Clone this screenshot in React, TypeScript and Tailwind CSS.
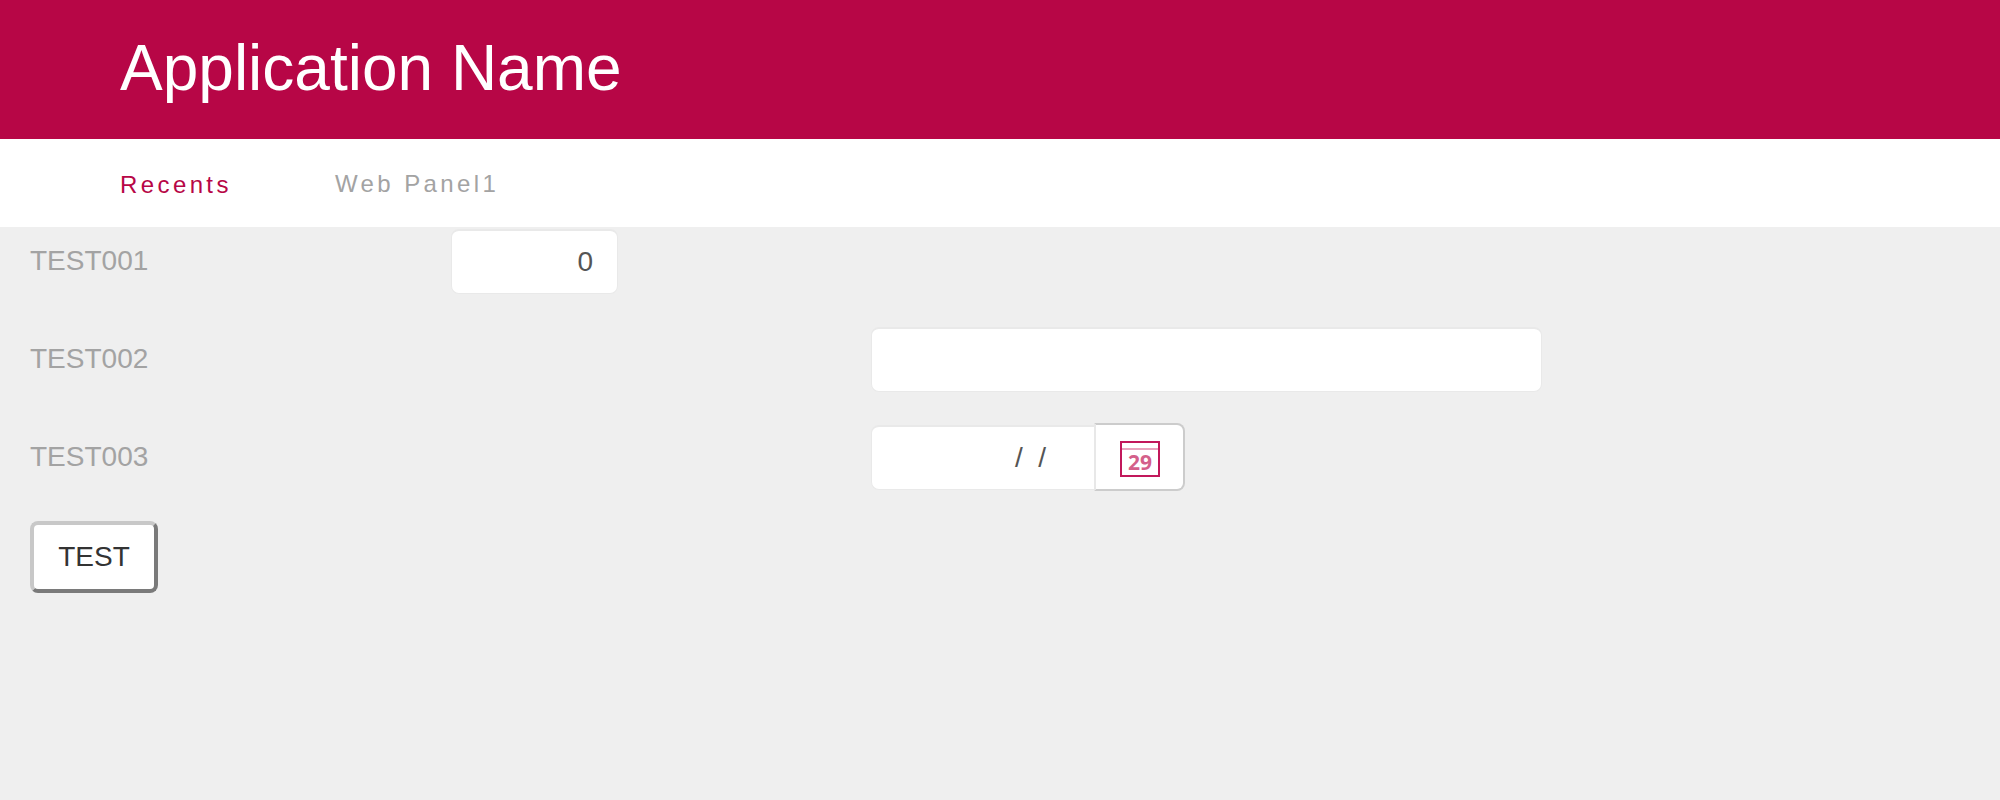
const sans = "font-['Liberation_Sans',Arial,sans-serif]";

function CalendarIcon() {
  return (
    <svg className="mt-[3px]" width="40" height="36" viewBox="0 0 40 36" fill="none">
      <rect x="1" y="1" width="38" height="34" fill="#fff" stroke="#c2185b" strokeWidth="2" />
      <line x1="2" y1="8" x2="38" y2="8" stroke="#e9a3bd" strokeWidth="2" />
      <text
        x="20"
        y="29"
        textAnchor="middle"
        fontSize="21"
        fontWeight="700"
        fill="#d4608a"
        fontFamily="'Open Sans', sans-serif"
      >
        29
      </text>
    </svg>
  );
}

function Label({ children, width }: { children: string; width: string }) {
  return <div className={`${width} shrink-0 text-[28px] leading-[64px] text-[#a3a3a3]`}>{children}</div>;
}

const inputClass =
  "h-[65px] rounded-[8px] border border-t-2 border-[#e9e9e9] border-t-[#e9e9e9] bg-white text-[28px] text-[#555]";

export default function App() {
  return (
    <div className={`${sans} min-h-[800px] bg-[#efefef]`}>
      <header className="flex h-[139px] items-center bg-[#b70646] pb-[3px] pl-[120px]">
        <h1 className="text-[64px] leading-none text-white">Application Name</h1>
      </header>
      <nav className="flex h-[88px] items-center bg-white pl-[120px] pt-[2px] text-2xl tracking-[3.4px]">
        <a className="mt-[2px] w-[215px] text-[#b70646]">Recents</a>
        <a className="text-[#a3a3a3]">Web Panel1</a>
      </nav>
      <main className="pl-[30px]">
        <div className="flex h-[66px] items-center pt-[3px]">
          <Label width="-mt-[2px] w-[421px]">TEST001</Label>
          <div className={`${inputClass} flex w-[167px] items-center justify-end pr-6`}>0</div>
        </div>
        <div className="mt-[33px] flex h-[66px] items-center">
          <Label width="w-[841px]">TEST002</Label>
          <div className={`${inputClass} w-[671px]`} />
        </div>
        <div className="mt-[32px] flex h-[66px] items-center">
          <Label width="w-[841px]">TEST003</Label>
          <div className={`${inputClass} flex w-[223px] items-center justify-end rounded-r-none border-r-0 pr-[48px]`}>
            <span className="whitespace-pre">/  /</span>
          </div>
          <button className="flex h-[68px] w-[91px] items-center justify-center rounded-r-[8px] border-2 border-[#cccccc] border-l-[#e8e8e8] bg-white">
            <CalendarIcon />
          </button>
        </div>
        <button className="mt-[31px] h-[72px] w-[128px] rounded-[8px] border-4 border-[#c8c8c8] border-r-[#7a7a7a] border-b-[#7a7a7a] bg-white text-[28px] text-[#333]">
          TEST
        </button>
      </main>
    </div>
  );
}
